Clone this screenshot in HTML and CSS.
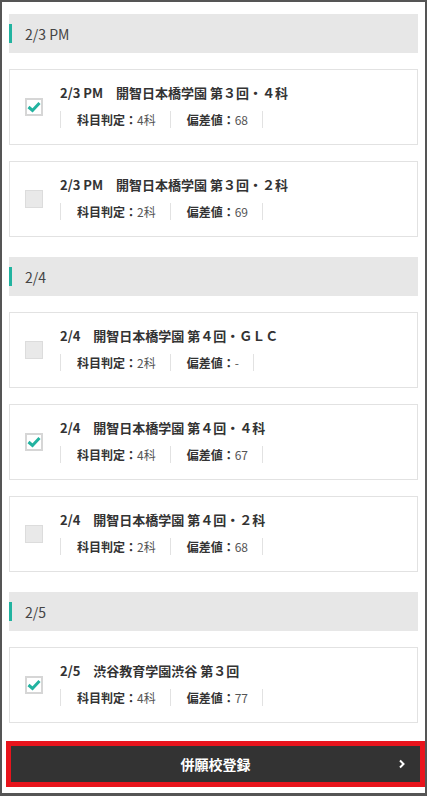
FILE: index.html
```html
<!DOCTYPE html>
<html lang="ja">
<head>
  <meta charset="UTF-8">
  <title>併願校登録</title>
  <link rel="stylesheet" href="styles.css">
</head>
<body>
  <div class="list">
    <!-- 2/3 PM -->
    <section class="day">
      <h2 class="day-head">2/3 PM</h2>
      <label class="exam-card">
        <span class="check is-checked"><svg viewBox="0 0 18 18" width="18" height="18"><path d="M3.5 9 L7.5 12.5 L14.5 5" fill="none" stroke="#22b3a0" stroke-width="3"/></svg></span>
        <div class="exam-body">
          <p class="exam-title">2/3 PM　開智日本橋学園 第３回・４科</p>
          <ul class="exam-meta">
            <li><b>科目判定：</b>4科</li>
            <li><b>偏差値：</b>68</li>
          </ul>
        </div>
      </label>
      <label class="exam-card">
        <span class="check"></span>
        <div class="exam-body">
          <p class="exam-title">2/3 PM　開智日本橋学園 第３回・２科</p>
          <ul class="exam-meta">
            <li><b>科目判定：</b>2科</li>
            <li><b>偏差値：</b>69</li>
          </ul>
        </div>
      </label>
    </section>

    <!-- 2/4 -->
    <section class="day">
      <h2 class="day-head">2/4</h2>
      <label class="exam-card">
        <span class="check"></span>
        <div class="exam-body">
          <p class="exam-title">2/4　開智日本橋学園 第４回・ＧＬＣ</p>
          <ul class="exam-meta">
            <li><b>科目判定：</b>2科</li>
            <li><b>偏差値：</b>-</li>
          </ul>
        </div>
      </label>
      <label class="exam-card">
        <span class="check is-checked"><svg viewBox="0 0 18 18" width="18" height="18"><path d="M3.5 9 L7.5 12.5 L14.5 5" fill="none" stroke="#22b3a0" stroke-width="3"/></svg></span>
        <div class="exam-body">
          <p class="exam-title">2/4　開智日本橋学園 第４回・４科</p>
          <ul class="exam-meta">
            <li><b>科目判定：</b>4科</li>
            <li><b>偏差値：</b>67</li>
          </ul>
        </div>
      </label>
      <label class="exam-card">
        <span class="check"></span>
        <div class="exam-body">
          <p class="exam-title">2/4　開智日本橋学園 第４回・２科</p>
          <ul class="exam-meta">
            <li><b>科目判定：</b>2科</li>
            <li><b>偏差値：</b>68</li>
          </ul>
        </div>
      </label>
    </section>

    <!-- 2/5 -->
    <section class="day">
      <h2 class="day-head">2/5</h2>
      <label class="exam-card">
        <span class="check is-checked"><svg viewBox="0 0 18 18" width="18" height="18"><path d="M3.5 9 L7.5 12.5 L14.5 5" fill="none" stroke="#22b3a0" stroke-width="3"/></svg></span>
        <div class="exam-body">
          <p class="exam-title">2/5　渋谷教育学園渋谷 第３回</p>
          <ul class="exam-meta">
            <li><b>科目判定：</b>4科</li>
            <li><b>偏差値：</b>77</li>
          </ul>
        </div>
      </label>
    </section>
  </div>

  <!-- 登録ボタン -->
  <div class="submit-area">
    <button class="submit-button">
      <span>併願校登録</span>
      <svg class="chevron" viewBox="0 0 8 10" width="8" height="10"><path d="M2 1.5 L5.5 5 L2 8.5" fill="none" stroke="#fff" stroke-width="2"/></svg>
    </button>
  </div>
</body>
</html>
```

FILE: styles.css
```css
html, body {
  margin: 0;
  height: 100%;
}

body {
  box-sizing: border-box;
  border: 2px solid #555;
  border-bottom-width: 3px;
  background-color: #fff;
  font-family: "Noto Sans CJK JP", "Noto Sans", sans-serif;
  color: #333;
  display: flex;
  flex-direction: column;
}

/* 日付ごとのリスト */
.list {
  flex: 1;
  padding: 12px 7px 0;
  display: flex;
  flex-direction: column;
  gap: 20px;
}

.day {
  display: flex;
  flex-direction: column;
  gap: 16px;
}

.day-head {
  margin: 0;
  height: 39px;
  background-color: #e7e7e7;
  box-sizing: border-box;
  padding-left: 16px;
  display: flex;
  align-items: center;
  gap: 13px;
  font-size: 14px;
  font-weight: normal;
  color: #444;
  position: relative;
}

/* 左の緑ライン */
.day-head::before {
  content: '';
  position: absolute;
  left: 0;
  top: 10px;
  width: 3px;
  height: 19px;
  background-color: #22b3a0;
}

/* 受験校カード */
.exam-card {
  height: 76px;
  box-sizing: border-box;
  border: 1px solid #e2e2e2;
  padding: 0 15px;
  display: flex;
  align-items: center;
  gap: 17px;
  cursor: pointer;
}

.check {
  width: 18px;
  height: 18px;
  box-sizing: border-box;
  border: 1px solid #dcdcdc;
  background-color: #e9e9e9;
  margin-top: -1px;
  display: flex;
}

.check.is-checked {
  background-color: #fff;
  border: 2px solid #d6d6d6;
}

.check.is-checked svg {
  margin: -2px;
}

.exam-body {
  display: flex;
  flex-direction: column;
  gap: 8px;
  margin-top: -3px;
}

.exam-title {
  margin: 0;
  font-size: 13px;
  line-height: 20px;
  font-weight: bold;
  color: #333;
}

.exam-meta {
  margin: 0;
  padding: 0;
  list-style: none;
  display: flex;
}

.exam-meta li {
  border-left: 1px solid #e2e2e2;
  padding: 0 14px 0 16px;
  font-size: 12px;
  line-height: 17px;
  color: #555;
}

.exam-meta li:last-child {
  border-right: 1px solid #e2e2e2;
}

.exam-meta b {
  color: #333;
}

/* 登録ボタン */
.submit-area {
  padding: 0 5px 11px 9px;
}

.submit-button {
  width: 100%;
  height: 36px;
  border: none;
  background-color: #333;
  color: #fff;
  outline: 5px solid #e8141c;
  font-family: inherit;
  font-size: 14px;
  font-weight: bold;
  position: relative;
  display: flex;
  align-items: center;
  justify-content: center;
  cursor: pointer;
}

.submit-button .chevron {
  position: absolute;
  right: 14px;
  top: 13px;
}
```
